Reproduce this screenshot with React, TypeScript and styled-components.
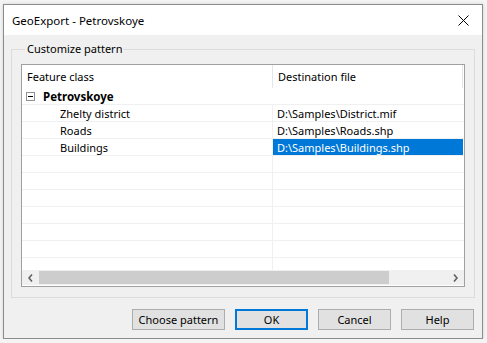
import React from 'react';
import styled, { createGlobalStyle } from 'styled-components';

const GlobalStyle = createGlobalStyle`
  html, body {
    margin: 0;
    padding: 0;
    background: #f4f4f4;
  }
  body {
    font-family: "Noto Sans", "Open Sans", sans-serif;
    font-size: 11px;
    color: #000;
  }
`;

const Window = styled.div`
  margin: 4px 0 0 3px;
  width: 478px;
  height: 333px;
  border: 1px solid #8c8c8c;
  background: #f0f0f0;
  display: flex;
  flex-direction: column;
  box-shadow: 0 0 3px rgba(0, 0, 0, 0.15);
`;

const TitleBar = styled.div`
  height: 30px;
  background: #fff;
  display: flex;
  align-items: center;
  justify-content: space-between;
  padding: 0 13px 0 8px;
  font-size: 11.5px;
`;

const CloseIcon = () => (
  <svg width="11" height="11" viewBox="0 0 11 11">
    <path d="M0.5 0.5 L10.5 10.5 M10.5 0.5 L0.5 10.5" stroke="#000" strokeWidth="1" />
  </svg>
);

const Body = styled.div`
  flex: 1;
  display: flex;
  flex-direction: column;
  padding: 6px 7px 7px 7px;
`;

const GroupBox = styled.fieldset`
  margin: 0;
  padding: 7px 9px 10px 9px;
  border: 1px solid #dcdcdc;
  display: flex;
  flex-direction: column;
  min-width: 0;
`;

const Legend = styled.legend`
  padding: 0 2px;
  margin-left: 4px;
  line-height: 16px;
`;

const ListView = styled.div`
  border: 1px solid #a0a0a0;
  background: #fff;
  display: flex;
  flex-direction: column;
  height: 221px;
`;

const Rows = styled.div`
  flex: 1;
  overflow: hidden;
`;

const Header = styled.div`
  display: flex;
  height: 23px;
`;

const HeaderCell = styled.div<{ $w: number }>`
  width: ${p => p.$w}px;
  flex: none;
  padding-left: 5px;
  box-sizing: border-box;
  display: flex;
  align-items: center;
  border-right: 1px solid #e5e5e5;
`;

const Row = styled.div`
  display: flex;
  height: 17px;
  border-bottom: 1px solid #f0f0f0;
  box-sizing: border-box;
`;

const Cell = styled.div<{ $w: number; $indent?: number; $sel?: boolean; $line?: boolean; $bold?: boolean }>`
  width: ${p => p.$w}px;
  flex: none;
  box-sizing: border-box;
  display: flex;
  align-items: center;
  padding-left: ${p => p.$indent ?? 4}px;
  border-right: 1px solid ${p => (p.$line ? '#f0f0f0' : 'transparent')};
  background: ${p => (p.$sel ? '#0078d7' : 'transparent')};
  color: ${p => (p.$sel ? '#fff' : '#000')};
  font-weight: ${p => (p.$bold ? 700 : 400)};
  font-size: ${p => (p.$bold ? '11.5px' : 'inherit')};
  white-space: nowrap;
`;

const Toggle = styled.span`
  width: 7px;
  height: 7px;
  border: 1px solid #919191;
  margin-right: 8px;
  display: inline-flex;
  align-items: center;
  justify-content: center;
  flex: none;
  &::after {
    content: '';
    width: 5px;
    height: 1px;
    background: #000;
  }
`;

const ScrollBar = styled.div`
  height: 15px;
  background: #f0f0f0;
  display: flex;
  align-items: stretch;
  margin-bottom: 1px;
`;

const ScrollArrow = styled.div`
  width: 17px;
  flex: none;
  display: flex;
  align-items: center;
  justify-content: center;
`;

const Track = styled.div`
  flex: 1;
  display: flex;
  padding: 1px 0;
`;

const Thumb = styled.div`
  background: #cdcdcd;
  height: 100%;
`;

const Buttons = styled.div`
  display: flex;
  justify-content: flex-end;
  gap: 10px;
  margin-top: 11px;
  padding-right: 1px;
`;

const Button = styled.button<{ $w: number; $default?: boolean }>`
  width: ${p => p.$w}px;
  height: 21px;
  padding: 0;
  font-family: inherit;
  font-size: 11px;
  color: #000;
  background: #e1e1e1;
  border: 1px solid ${p => (p.$default ? '#0078d7' : '#adadad')};
  box-shadow: ${p => (p.$default ? 'inset 0 0 0 1px #0078d7' : 'none')};
`;

const Chevron = ({ dir }: { dir: 'left' | 'right' }) => (
  <svg width="5" height="8" viewBox="0 0 5 8">
    <path
      d={dir === 'left' ? 'M4 0.5 L1 4 L4 7.5' : 'M1 0.5 L4 4 L1 7.5'}
      fill="none"
      stroke="#606060"
      strokeWidth="1.6"
    />
  </svg>
);

const COL1 = 251;
const COL2 = 190;

const items = [
  { name: 'Zhelty district', file: 'D:\\Samples\\District.mif' },
  { name: 'Roads', file: 'D:\\Samples\\Roads.shp' },
  { name: 'Buildings', file: 'D:\\Samples\\Buildings.shp', selected: true },
];

export default function App() {
  return (
    <>
      <GlobalStyle />
      <Window>
        <TitleBar>
          <span>GeoExport - Petrovskoye</span>
          <CloseIcon />
        </TitleBar>
        <Body>
          <GroupBox>
            <Legend>Customize pattern</Legend>
            <ListView>
              <Rows>
                <Header>
                  <HeaderCell $w={COL1}>Feature class</HeaderCell>
                  <HeaderCell $w={COL2}>Destination file</HeaderCell>
                </Header>
                <Row>
                  <Cell $w={COL1} $bold $indent={4}>
                    <Toggle />
                    Petrovskoye
                  </Cell>
                  <Cell $w={COL2} />
                </Row>
                {items.map(it => (
                  <Row key={it.name}>
                    <Cell $w={COL1} $indent={38} $line>{it.name}</Cell>
                    <Cell $w={COL2} $sel={it.selected}>{it.file}</Cell>
                  </Row>
                ))}
                {Array.from({ length: 7 }).map((_, i) => (
                  <Row key={i}>
                    <Cell $w={COL1} $line />
                    <Cell $w={COL2} />
                  </Row>
                ))}
              </Rows>
              <ScrollBar>
                <ScrollArrow><Chevron dir="left" /></ScrollArrow>
                <Track>
                  <Thumb style={{ width: `${(349 / 407) * 100}%` }} />
                </Track>
                <ScrollArrow><Chevron dir="right" /></ScrollArrow>
              </ScrollBar>
            </ListView>
          </GroupBox>
          <Buttons>
            <Button $w={93}>Choose pattern</Button>
            <Button $w={73} $default>OK</Button>
            <Button $w={73}>Cancel</Button>
            <Button $w={73}>Help</Button>
          </Buttons>
        </Body>
      </Window>
    </>
  );
}
